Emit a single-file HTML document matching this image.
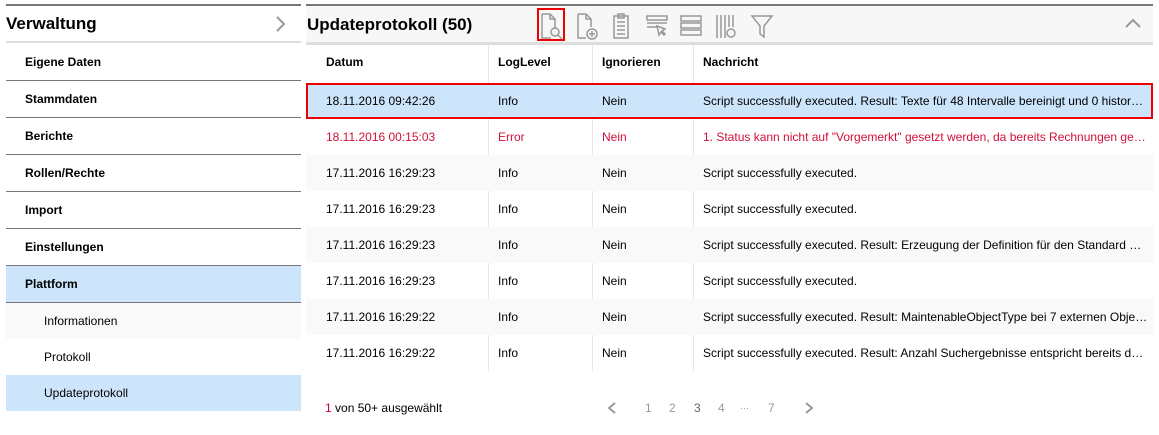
<!DOCTYPE html>
<html><head><meta charset="utf-8"><style>
*{box-sizing:border-box;margin:0;padding:0}
body{width:1159px;height:435px;background:#fff;font-family:"Liberation Sans",Arial,sans-serif;font-size:12px;color:#000;position:relative;overflow:hidden}
.abs{position:absolute}
.topline{position:absolute;top:4px;height:2px;background:#777}
.lm{position:absolute;left:6px;width:295px}
.mi{position:absolute;left:6px;width:295px;height:37px;line-height:36px;padding-left:19px;font-weight:bold;border-bottom:1px solid #777}
.si{position:absolute;left:6px;width:295px;height:36px;line-height:36px;padding-left:38px}
.row{position:absolute;left:306px;width:847px;height:36px;line-height:36px}
.row span{position:absolute;top:0}
.c1{left:20px}.c2{left:192px}.c3{left:296px}.c4{left:397px;width:445px;white-space:nowrap;overflow:hidden;text-overflow:ellipsis}
.vl{position:absolute;top:44px;height:327px;width:1px;background:#e6e6e6}
.pg{position:absolute;top:401px;color:#999;font-size:12px}
</style></head><body>
<div class="topline" style="left:6px;width:295px"></div>
<div class="topline" style="left:306px;width:847px"></div>
<!-- left header -->
<div class="abs" style="left:6px;top:6px;width:295px;height:37px;border-bottom:2px solid #ddd"></div>
<div class="abs" style="left:6px;top:14px;font-size:17px;font-weight:bold">Verwaltung</div>
<svg class="abs" style="left:275px;top:16px" width="12" height="16"><path d="M2 1 L9 8 L2 15" fill="none" stroke="#999" stroke-width="2"/></svg>
<div class="mi" style="top:44px">Eigene Daten</div>
<div class="mi" style="top:81px">Stammdaten</div>
<div class="mi" style="top:118px">Berichte</div>
<div class="mi" style="top:155px">Rollen/Rechte</div>
<div class="mi" style="top:192px">Import</div>
<div class="mi" style="top:229px">Einstellungen</div>
<div class="mi" style="top:266px;background:#cce5fb">Plattform</div>
<div class="si" style="top:303px;background:#f9f9f9">Informationen</div>
<div class="si" style="top:339px">Protokoll</div>
<div class="si" style="top:375px;background:#cce5fb">Updateprotokoll</div>
<!-- right header -->
<div class="abs" style="left:306px;top:6px;width:847px;height:39px;background:#f7f7f7;border-bottom:3px solid #ddd"></div>
<div class="abs" style="left:307px;top:15px;font-size:17px;font-weight:bold">Updateprotokoll (50)</div>
<div class="abs" style="left:537px;top:8px;width:28px;height:33px;border:2px solid #e00"></div>
<svg class="abs" style="left:530px;top:5px" width="250" height="40" fill="none" stroke="#999" stroke-width="1.5">
 <path d="M12 9h8l5 5v10M12 9v24h9M20 9v5h5"/><circle cx="25" cy="27" r="4"/><path d="M28 30l4 4"/>
 <path d="M48 9h8l5 5v8M48 9v24h8M56 9v5h5"/><circle cx="62" cy="29" r="5"/><path d="M59 29h6M62 26v6"/>
 <path d="M84 11h14v22h-14z"/><path d="M88 9h6v4h-6z"/><path d="M87 17h8M87 21h8M87 25h8M87 29h8"/>
 <path d="M117 11h20v4h-20zM117 18h20M117 22h10"/><path d="M127 21l8 3-3 2 3 3-1 1-3-3-2 3z"/>
 <path d="M151 11h20v5h-20zM151 18h20v5h-20zM151 25h20v5h-20z"/>
 <path d="M187 10v23M191 10v23M195 10v23M199 10v12M203 10v12"/><circle cx="201" cy="28" r="4"/>
 <path d="M222 11h20l-8 10v11l-4-3v-8z"/>
</svg>
<svg class="abs" style="left:1125px;top:17px" width="16" height="12"><path d="M1 10L8 3l7 7" fill="none" stroke="#999" stroke-width="2"/></svg>
<!-- table header -->
<div class="row" style="top:44px;font-weight:bold"><span class="c1">Datum</span><span class="c2">LogLevel</span><span class="c3">Ignorieren</span><span class="c4">Nachricht</span></div>
<div class="vl" style="left:488px"></div><div class="vl" style="left:592px"></div><div class="vl" style="left:693px"></div>
<div class="row" style="top:83px;background:#cce5fb;border:2px solid #e00;line-height:32px"><span class="c1" style="left:18px">18.11.2016 09:42:26</span><span class="c2" style="left:190px">Info</span><span class="c3" style="left:294px">Nein</span><span class="c4" style="left:395px;width:440px">Script successfully executed. Result: Texte für 48 Intervalle bereinigt und 0 historische Einträge</span></div>
<div class="row" style="top:119px;color:#d0103a"><span class="c1">18.11.2016 00:15:03</span><span class="c2">Error</span><span class="c3">Nein</span><span class="c4">1. Status kann nicht auf "Vorgemerkt" gesetzt werden, da bereits Rechnungen gestellt wurden</span></div>
<div class="row" style="top:155px;background:#f9f9f9"><span class="c1">17.11.2016 16:29:23</span><span class="c2">Info</span><span class="c3">Nein</span><span class="c4">Script successfully executed.</span></div>
<div class="row" style="top:191px"><span class="c1">17.11.2016 16:29:23</span><span class="c2">Info</span><span class="c3">Nein</span><span class="c4">Script successfully executed.</span></div>
<div class="row" style="top:227px;background:#f9f9f9"><span class="c1">17.11.2016 16:29:23</span><span class="c2">Info</span><span class="c3">Nein</span><span class="c4">Script successfully executed. Result: Erzeugung der Definition für den Standard Export</span></div>
<div class="row" style="top:263px"><span class="c1">17.11.2016 16:29:23</span><span class="c2">Info</span><span class="c3">Nein</span><span class="c4">Script successfully executed.</span></div>
<div class="row" style="top:299px;background:#f9f9f9"><span class="c1">17.11.2016 16:29:22</span><span class="c2">Info</span><span class="c3">Nein</span><span class="c4">Script successfully executed. Result: MaintenableObjectType bei 7 externen Objekten</span></div>
<div class="row" style="top:335px"><span class="c1">17.11.2016 16:29:22</span><span class="c2">Info</span><span class="c3">Nein</span><span class="c4">Script successfully executed. Result: Anzahl Suchergebnisse entspricht bereits dem Wert</span></div>
<div class="abs" style="left:325px;top:401px"><span style="color:#c03">1</span> von 50+ ausgewählt</div>
<svg class="abs" style="left:606px;top:402px" width="12" height="12"><path d="M9 1L3 6l6 5" fill="none" stroke="#999" stroke-width="2"/></svg>
<div class="pg" style="left:645px">1</div><div class="pg" style="left:669px">2</div><div class="pg" style="left:694px;color:#666">3</div><div class="pg" style="left:718px">4</div><div class="pg" style="left:740px;font-size:9px;top:403px">···</div><div class="pg" style="left:768px">7</div>
<svg class="abs" style="left:803px;top:402px" width="12" height="12"><path d="M3 1l6 5-6 5" fill="none" stroke="#999" stroke-width="2"/></svg>
</body></html>
